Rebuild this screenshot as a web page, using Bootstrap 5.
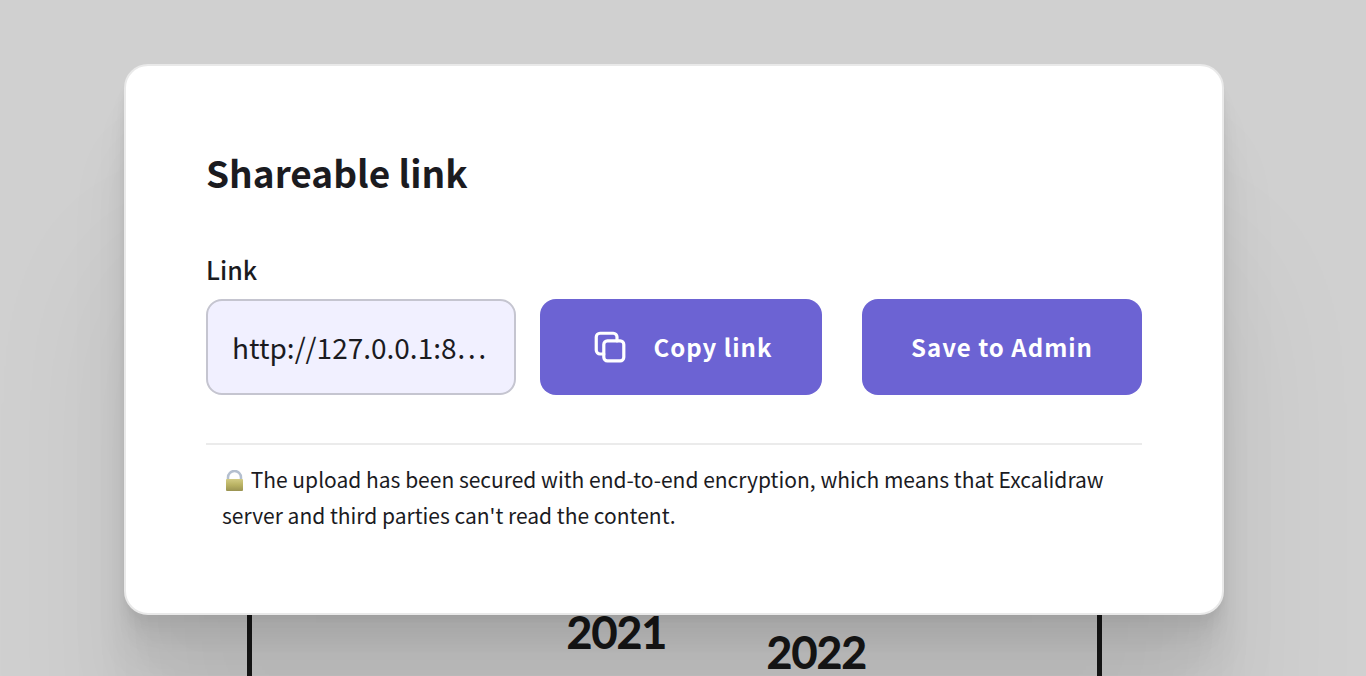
<!DOCTYPE html>
<html lang="en">
<head>
<meta charset="utf-8">
<meta name="viewport" content="width=device-width, initial-scale=1">
<title>Shareable link</title>
<link href="https://cdn.jsdelivr.net/npm/bootstrap@5.3.0/dist/css/bootstrap.min.css" rel="stylesheet">
<style>
  :root { --ink: #1b1b1f; --brand: #6c63d3; }
  body {
    font-family: "Noto Sans CJK KR", "Open Sans", sans-serif;
    color: var(--ink);
    background: #d0d0d0;
  }
  .stage { min-height: 100vh; padding: 64px 142px 61px 124px; }
  /* drawing behind the dialog */
  .sketch { inset: 0; }
  .sketch-edge { top: 50%; bottom: 0; width: 5px; background: #191919; }
  .sketch-year {
    font: 400 43px/36px Lato, sans-serif;
    color: #191919;
    -webkit-text-stroke: 2px #191919;
  }
  .dialog-box {
    background: #fff;
    border: 2px solid #e9e9e9;
    border-radius: 24px;
    padding: 80px;
    box-shadow:
      0 200px 160px rgba(0,0,0,.07),
      0 84px 67px rgba(0,0,0,.05),
      0 45px 36px rgba(0,0,0,.04),
      0 25px 20px rgba(0,0,0,.035),
      0 13px 11px rgba(0,0,0,.03),
      0 6px 4px rgba(0,0,0,.02);
  }
  .dialog-title { font-size: 37px; font-weight: 700; line-height: 52px; margin-bottom: 52px; }
  .field-label { font-size: 25px; font-weight: 500; line-height: 38px; margin-bottom: 11px; }
  .link-field {
    height: 96px; padding: 0 24px; font-size: 28px; color: var(--ink);
    background: #f1f0ff; border: 2px solid #c5c5d0; border-radius: 16px;
    text-overflow: ellipsis; min-width: 0;
  }
  .btn-brand {
    --bs-btn-color: #fff; --bs-btn-bg: var(--brand); --bs-btn-border-width: 0;
    --bs-btn-hover-color: #fff; --bs-btn-hover-bg: #5b57d1;
    --bs-btn-active-color: #fff; --bs-btn-active-bg: #4a47b1;
    --bs-btn-border-radius: 16px;
    height: 96px; font-size: 24px; font-weight: 700; letter-spacing: 1px;
  }
  .btn-copy { width: 282px; gap: 24px; margin-right: 40px; }
  .btn-save { width: 280px; }
  .note { border-top: 2px solid #ebebeb; margin-top: 48px; padding: 16px 16px 0; font-size: 21px; line-height: 36px; }
</style>
</head>
<body>
<div class="stage position-relative overflow-hidden">
  <div class="sketch position-absolute" aria-hidden="true">
    <div class="sketch-edge position-absolute" style="left:247px"></div>
    <div class="sketch-edge position-absolute" style="left:1097px"></div>
    <span class="sketch-year position-absolute" style="left:567px;top:614px">2021</span>
    <span class="sketch-year position-absolute" style="left:767px;top:634px">2022</span>
  </div>

  <main class="dialog-box position-relative" role="dialog" aria-labelledby="dialogTitle">
    <h1 class="dialog-title" id="dialogTitle">Shareable link</h1>
    <label class="field-label d-block" for="shareLink">Link</label>
    <div class="d-flex">
      <input class="link-field form-control flex-fill w-auto me-4" id="shareLink" type="text" readonly value="http://127.0.0.1:8…">
      <button type="button" class="btn btn-brand btn-copy d-flex align-items-center justify-content-center flex-shrink-0">
        <svg width="40" height="40" viewBox="0 0 20 20" fill="none" stroke="currentColor" stroke-width="1.6" stroke-linecap="round" stroke-linejoin="round" aria-hidden="true">
          <rect x="6.9" y="6.9" width="10" height="10" rx="1.8"/>
          <path d="M13.5 6.900V5a1.875 1.875 0 0 0-1.875-1.875H5A1.875 1.875 0 0 0 3.125 5v6.667A1.875 1.875 0 0 0 5 13.500h1.900"/>
        </svg>
        <span>Copy link</span>
      </button>
      <button type="button" class="btn btn-brand btn-save flex-shrink-0">Save to Admin</button>
    </div>
    <p class="note mb-0">
      <svg width="24" height="24" viewBox="0 0 24 24" role="img" aria-label="Locked">
        <defs>
          <linearGradient id="lockBody" x2="0" y2="1"><stop stop-color="#d2cb83"/><stop offset=".5" stop-color="#b9b263"/><stop offset="1" stop-color="#9a9352"/></linearGradient>
        </defs>
        <path d="M6 12V7.500a6.500 6.500 0 0 1 13 0V12" fill="none" stroke="#b4bfcf" stroke-width="2.500"/>
        <rect x="4" y="9" width="17" height="12" rx="1" fill="url(#lockBody)"/>
      </svg>
      The upload has been secured with end-to-end encryption, which means that Excalidraw server and third parties can't read the content.
    </p>
  </main>
</div>
<script src="https://cdn.jsdelivr.net/npm/bootstrap@5.3.0/dist/js/bootstrap.bundle.min.js"></script>
</body>
</html>
